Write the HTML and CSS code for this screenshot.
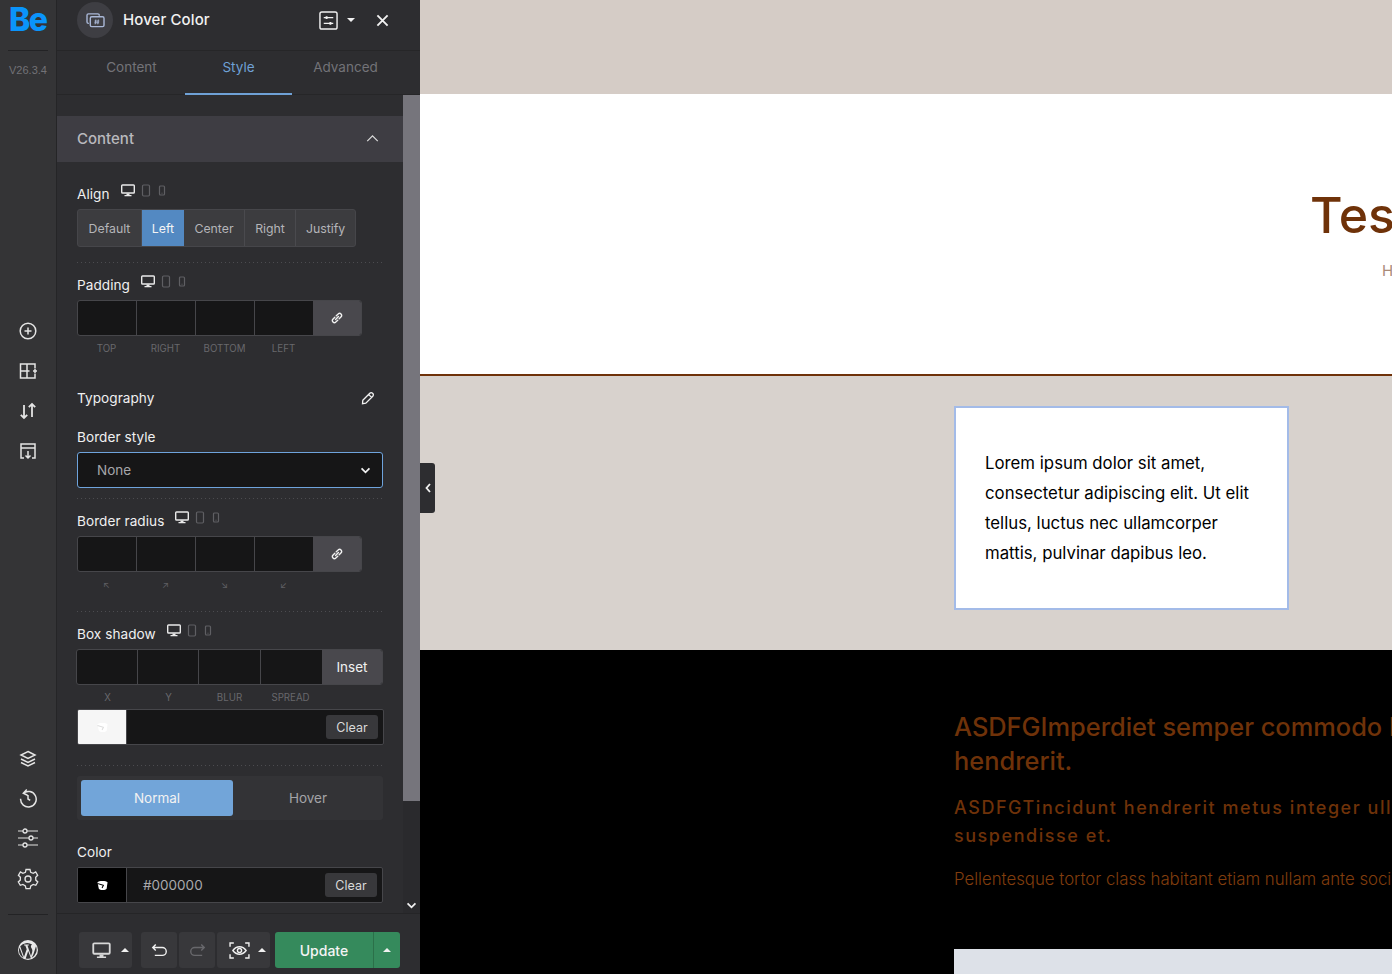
FILE: index.html
```html
<!DOCTYPE html>
<html lang="en">
<head>
<meta charset="utf-8">
<title>Hover Color</title>
<link rel="stylesheet" href="styles.css">
</head>
<body>
<svg class="defs" width="0" height="0" aria-hidden="true">
  <symbol id="i-desktop" viewBox="0 0 14 13"><path d="M1.500 1h11a.8.8 0 0 1 .8.8v6.400a.8.8 0 0 1-.8.8h-11a.8.8 0 0 1-.8-.8V1.800a.8.8 0 0 1 .8-.8z" fill="none" stroke="currentColor" stroke-width="1.400"/><path d="M5.500 9.500h3v1.500h-3zM3.500 11h7v1.200h-7z" fill="currentColor"/></symbol>
  <symbol id="i-tablet" viewBox="0 0 10 13"><rect x="1.500" y="1" width="7" height="11" rx="1.200" fill="none" stroke="currentColor" stroke-width="1.200"/></symbol>
  <symbol id="i-phone" viewBox="0 0 8 13"><rect x="1.500" y="2" width="5" height="9" rx="1" fill="none" stroke="currentColor" stroke-width="1.200"/><path d="M3.500 9.200h1" stroke="currentColor"/></symbol>
  <symbol id="i-link" viewBox="1 1 10 10"><path d="M4.800 7.200l2.400-2.400M4.200 5.400L2.400 7.200a1.750 1.750 0 0 0 2.400 2.400L6.600 7.800M5.400 4.200L7.200 2.400a1.750 1.750 0 0 1 2.400 2.400L7.800 6.600" fill="none" stroke="currentColor" stroke-width="1.150" stroke-linecap="round"/></symbol>
  <symbol id="i-drop" viewBox="0 0 14 12"><path d="M1.500 2.500C3 .8 11 .8 12.500 2.500L11.500 9.500C10.500 11.500 4 11.500 3 9.500z" fill="currentColor"/><path d="M1.500 3.800l6.500 2-1.500 3" fill="none" stroke="var(--drop-line)" stroke-width="1.100"/></symbol>
</svg>

<aside class="rail">
  <div class="rail-top">
    <div class="logo">Be</div>
    <div class="version">V26.3.4</div>
  </div>
  <div class="rail-tools">
    <svg class="rail-icon" viewBox="0 0 20 20"><circle cx="10" cy="10" r="7.800"/><path d="M10 6.500v7M6.500 10h7"/></svg>
    <svg class="rail-icon" viewBox="0 0 20 20"><path d="M17 7.500V3H2.500v14H17v-4.500M2.500 10h9M9 3v14"/><path d="M15 10h4M17 8v4"/></svg>
    <svg class="rail-icon heavy" viewBox="0 0 20 20"><path d="M6 4v13M2.800 13.800L6 17l3.200-3.200M14 16V3M10.800 6.200L14 3l3.200 3.200"/></svg>
    <svg class="rail-icon" viewBox="0 0 20 20"><path d="M6 17H3V3h14v14h-3M3 7h14M10 10v7M7.500 14.500l2.500 2.500 2.500-2.500"/></svg>
  </div>
  <div class="rail-bottom">
    <svg class="rail-icon" viewBox="0 0 20 20"><path d="M10 2.500l7 3.500-7 3.500L3 6zM3 10l7 3.500 7-3.500M3 13.500L10 17l7-3.500"/></svg>
    <svg class="rail-icon" viewBox="0 0 20 20"><path d="M5.300 5.300A7.800 7.800 0 1 1 2.600 10.800M8.800 1.500L5.300 5.300l4.200 2M10 7v4l2.200 1.400"/></svg>
    <svg class="rail-icon wide sliders" viewBox="0 0 22 22"><path d="M1 4h5M10 4h11M1 11h11M16 11h5M1 18h5M10 18h11"/><circle cx="8" cy="4" r="2"/><circle cx="14" cy="11" r="2"/><circle cx="8" cy="18" r="2"/></svg>
    <svg class="rail-icon wide" viewBox="0 0 22 22"><circle cx="11" cy="11" r="3"/><path d="M9 1.500h4l.7 2.800 2.500 1 2.500-1.400 2 3.400-2 2 .1 2.800 2 1.800-2 3.400-2.600-.8-2.400 1.400-.7 2.800H9l-.7-2.800-2.400-1.400-2.600.8-2-3.400 2-1.800.1-2.800-2-2 2-3.400 2.500 1.400 2.500-1z"/></svg>
    <div class="rail-rule"></div>
    <svg class="wp" viewBox="0 0 22 22"><circle cx="11" cy="11" r="10" fill="currentColor"/><path class="wp-w" d="M3.200 7.300L7 18l2.700-7.700-1.400-3.800-1.200-.1V5.500h4.700v.9l-1.300.1 3.500 10.400 1.100-3.500c.6-1.800.2-2.700-.4-3.800-.6-1-1.100-2-.6-3 .2-.5.600-.8 1-1A9 9 0 0 0 3.200 7.300z"/><path class="wp-w" d="M2.400 8.500L6.400 19A9 9 0 0 1 2.400 8.500zM11.200 12l-2.500 7.400a9 9 0 0 0 5.200-.1zM19 7.300l-2.500 7.600-1.800 3.800A9 9 0 0 0 19 7.300z"/></svg>
  </div>
</aside>

<section class="panel">
  <header class="panel-head">
    <div class="head-badge">
      <svg viewBox="0 0 20 18" class="head-glyph"><path d="M3 12H2.500A1.500 1.500 0 0 1 1 10.500v-7A1.500 1.500 0 0 1 2.500 2h10A1.500 1.500 0 0 1 14 3.500V4"/><rect x="4.500" y="5" width="14.500" height="10.500" rx="1.500"/><path class="fine" d="M10.300 8l-.6 5M13 8l-.6 5M9 9.600h5M8.800 11.400h5"/></svg>
    </div>
    <h1 class="head-title">Hover Color</h1>
    <svg class="head-sliders" viewBox="0 0 20 20"><rect x="1" y="1" width="18" height="18" rx="2"/><path d="M5 7h10M5 13h10"/><path class="knob" d="M8 5.500v3M12 11.500v3"/></svg>
    <span class="caret-down head-caret"></span>
    <svg class="head-close" viewBox="0 0 14 14"><path d="M1.500 1.500l11 11M12.500 1.500l-11 11"/></svg>
  </header>
  <nav class="tabs">
    <span class="tab">Content</span>
    <span class="tab tab-on">Style</span>
    <span class="tab">Advanced</span>
  </nav>
  <div class="panel-scroll">
    <div class="panel-body">
      <div class="group-head">
        <span>Content</span>
        <svg class="chev-up" viewBox="0 0 14 8"><path d="M1 7l6-6 6 6"/></svg>
      </div>
      <div class="fields">
        <div class="label-row label-align">
          <span class="label">Align</span>
          <span class="devices"><svg class="dev on"><use href="#i-desktop"/></svg><svg class="dev tb"><use href="#i-tablet"/></svg><svg class="dev ph"><use href="#i-phone"/></svg></span>
        </div>
        <div class="segments">
          <span class="seg seg-default">Default</span><span class="seg seg-on">Left</span><span class="seg seg-center">Center</span><span class="seg seg-right">Right</span><span class="seg seg-justify">Justify</span>
        </div>
        <div class="dots dots-a"></div>

        <div class="label-row">
          <span class="label">Padding</span>
          <span class="devices"><svg class="dev on"><use href="#i-desktop"/></svg><svg class="dev tb"><use href="#i-tablet"/></svg><svg class="dev ph"><use href="#i-phone"/></svg></span>
        </div>
        <div class="quad">
          <span class="cell"></span><span class="cell"></span><span class="cell"></span><span class="cell"></span>
          <span class="quad-btn"><svg class="link"><use href="#i-link"/></svg></span>
        </div>
        <div class="sublabels"><span>TOP</span><span>RIGHT</span><span>BOTTOM</span><span>LEFT</span></div>

        <div class="typo-row">
          <span class="label">Typography</span>
          <svg class="pencil" viewBox="0 0 14 14"><path d="M1.800 9.200L8.800 2.200a1.900 1.900 0 0 1 2.700 0l.3.300a1.900 1.900 0 0 1 0 2.700l-7 7-3.300.5zM7.600 3.400l3 3"/></svg>
        </div>
        <div class="label label-border">Border style</div>
        <div class="select"><span>None</span><svg class="chev" viewBox="0 0 12 8"><path d="M1.500 1.500L6 6l4.500-4.500"/></svg></div>
        <div class="dots dots-b"></div>

        <div class="label-row">
          <span class="label">Border radius</span>
          <span class="devices"><svg class="dev on"><use href="#i-desktop"/></svg><svg class="dev tb"><use href="#i-tablet"/></svg><svg class="dev ph"><use href="#i-phone"/></svg></span>
        </div>
        <div class="quad">
          <span class="cell"></span><span class="cell"></span><span class="cell"></span><span class="cell"></span>
          <span class="quad-btn"><svg class="link"><use href="#i-link"/></svg></span>
        </div>
        <div class="sublabels arrows"><span>↖</span><span>↗</span><span>↘</span><span>↙</span></div>
        <div class="dots dots-c"></div>

        <div class="label-row">
          <span class="label">Box shadow</span>
          <span class="devices"><svg class="dev on"><use href="#i-desktop"/></svg><svg class="dev tb"><use href="#i-tablet"/></svg><svg class="dev ph"><use href="#i-phone"/></svg></span>
        </div>
        <div class="quad quad-shadow">
          <span class="cell"></span><span class="cell"></span><span class="cell"></span><span class="cell"></span>
          <span class="quad-btn inset">Inset</span>
        </div>
        <div class="sublabels shadow-labels"><span>X</span><span>Y</span><span>BLUR</span><span>SPREAD</span></div>
        <div class="color-row color-row-shadow">
          <span class="swatch swatch-white"><svg class="drop"><use href="#i-drop"/></svg></span>
          <span class="color-value"></span>
          <span class="clear">Clear</span>
        </div>
        <div class="dots dots-d"></div>

        <div class="states">
          <span class="state state-on">Normal</span>
          <span class="state">Hover</span>
        </div>
        <div class="label label-color">Color</div>
        <div class="color-row">
          <span class="swatch swatch-black"><svg class="drop"><use href="#i-drop"/></svg></span>
          <span class="color-value">#000000</span>
          <span class="clear">Clear</span>
        </div>
      </div>
    </div>
    <div class="scrollbar">
      <div class="scroll-thumb"></div>
      <svg class="scroll-down" viewBox="0 0 12 8"><path d="M1.500 1.500L6 6l4.500-4.500"/></svg>
    </div>
  </div>
  <footer class="panel-foot">
    <div class="foot-btn foot-device">
      <svg class="foot-desktop"><use href="#i-desktop"/></svg>
      <span class="caret-up"></span>
    </div>
    <div class="foot-btn foot-square">
      <svg class="foot-arrow" viewBox="0 0 18 16"><path d="M5 1.500L1.800 4.800 5 8M2 4.800h10a4.200 4.200 0 0 1 0 8.400H4"/></svg>
    </div>
    <div class="foot-btn foot-square foot-dim">
      <svg class="foot-arrow" viewBox="0 0 18 16"><path d="M13 1.500l3.200 3.300L13 8M16 4.800H6a4.200 4.200 0 0 0 0 8.400h8"/></svg>
    </div>
    <div class="foot-btn foot-device foot-eye">
      <svg class="eye" viewBox="0 0 22 18"><path d="M1 5V1h4M17 1h4v4M21 13v4h-4M5 17H1v-4"/><path d="M4 9c3.800-5.300 10.200-5.300 14 0-3.800 5.300-10.200 5.300-14 0z"/><circle cx="11" cy="9" r="2.200"/></svg>
      <span class="caret-up"></span>
    </div>
    <div class="update">
      <span class="update-main">Update</span>
      <span class="update-more"><span class="caret-up"></span></span>
    </div>
  </footer>
</section>

<button class="collapse" type="button" aria-label="Collapse panel"><svg viewBox="0 0 6 10"><path d="M5 1L1.500 5 5 9"/></svg></button>

<main class="canvas">
  <section class="band band-top"></section>
  <section class="band band-title">
    <h2 class="title">Test</h2>
    <p class="subtitle">Hover</p>
  </section>
  <section class="band band-card">
    <div class="card">
      <p>Lorem ipsum dolor sit amet,<br>consectetur adipiscing elit. Ut elit<br>tellus, luctus nec ullamcorper<br>mattis, pulvinar dapibus leo.</p>
    </div>
  </section>
  <section class="band band-dark">
    <h3 class="dark-h">ASDFGImperdiet semper commodo lacus<br>hendrerit.</h3>
    <h4 class="dark-s">ASDFGTincidunt hendrerit metus integer ullamcorper<br>suspendisse et.</h4>
    <p class="dark-p">Pellentesque tortor class habitant etiam nullam ante sociis</p>
    <div class="dark-box"></div>
  </section>
</main>
</body>
</html>
```

FILE: styles.css
```css
* { box-sizing: border-box; }
html, body { height: 100%; }
body {
  margin: 0;
  display: flex;
  height: 974px;
  overflow: hidden;
  font-family: "Inter", "Noto Sans", sans-serif;
  background: #000;
  position: relative;
}
h1, h2, h3, h4, p { margin: 0; }
.defs { position: absolute; }

/* rail */
.rail {
  flex: 0 0 57px;
  display: flex;
  flex-direction: column;
  background: #343436;
  border-right: 1px solid #252527;
  color: #e6e6e6;
}
.rail-top { height: 84px; }
.logo {
  height: 51px;
  margin: 0 8px;
  border-bottom: 1px solid #232325;
  font: 800 32px/40px "Inter", sans-serif;
  letter-spacing: -1.4px;
  text-indent: 1px;
  color: #0a94fb;
}
.version {
  margin-top: 12px;
  text-align: center;
  font: 11px/14px "Liberation Sans", sans-serif;
  color: #727276;
}
.rail-tools {
  margin-top: 237px;
  display: flex;
  flex-direction: column;
  align-items: center;
  gap: 20px;
}
.rail-icon {
  width: 20px;
  height: 20px;
  fill: none;
  stroke: #e4e4e4;
  stroke-width: 1.5;
}
.rail-icon.heavy { stroke-width: 1.8; }
.rail-icon.wide { width: 22px; height: 22px; stroke-width: 1.3; }
.rail-icon.sliders path { stroke: #a8a8a8; stroke-width: 1.6; }
.rail-bottom {
  margin-top: auto;
  display: flex;
  flex-direction: column;
  align-items: center;
  gap: 19px;
  padding-bottom: 13px;
}
.rail-rule {
  width: 40px;
  height: 1px;
  background: #232325;
  margin: 5px 0 5px;
}
.wp { width: 22px; height: 22px; color: #e8e8e8; }
.wp-w { fill: #343436; }

/* panel */
.panel {
  flex: 0 0 363px;
  width: 363px;
  min-width: 0;
  display: flex;
  flex-direction: column;
  background: #2d2d30;
  color: #fff;
}
.panel-head {
  height: 51px;
  flex: none;
  display: flex;
  align-items: center;
  padding: 0 0 10px 20px;
  border-bottom: 1px solid #262628;
}
.head-badge {
  width: 36px;
  height: 36px;
  border-radius: 50%;
  background: #3e3e43;
  display: flex;
  align-items: center;
  justify-content: center;
}
.head-glyph {
  width: 19px;
  height: 17px;
  fill: none;
  stroke: #a9b7d6;
  stroke-width: 1.5;
}
.head-glyph .fine { stroke-width: 1; }
.head-title {
  margin-left: 10px;
  font-size: 15px;
  font-weight: 500;
  line-height: 20px;
  letter-spacing: .1px;
  color: #f1f1f1;
  flex: 1;
}
.head-sliders {
  width: 19px;
  height: 19px;
  fill: none;
  stroke: #f1f1f1;
  stroke-width: 1.5;
}
.head-sliders .knob { stroke-width: 2; }
.head-caret { margin: 0 0 0 9px; }
.head-close {
  width: 13px;
  height: 13px;
  margin: 0 31px 0 21px;
  fill: none;
  stroke: #f2f2f2;
  stroke-width: 2;
}
.caret-down {
  width: 0;
  height: 0;
  border-left: 4px solid transparent;
  border-right: 4px solid transparent;
  border-top: 4px solid #f1f1f1;
}
.caret-up {
  display: block;
  width: 0;
  height: 0;
  border-left: 4px solid transparent;
  border-right: 4px solid transparent;
  border-bottom: 4px solid #f1f1f1;
}

.tabs {
  height: 44px;
  flex: none;
  display: flex;
  padding-left: 21px;
  border-bottom: 1px solid #262628;
}
.tab {
  flex: 0 0 107px;
  padding-top: 8px;
  text-align: center;
  font-size: 13.500px;
  line-height: 17px;
  color: #737378;
}
.tab-on {
  color: #6fa1d6;
  border-bottom: 2px solid #6fa1d6;
  margin-bottom: -1px;
}

.panel-scroll {
  flex: 1;
  display: flex;
  min-height: 0;
}
.panel-body {
  flex: 1;
  min-width: 0;
  padding-top: 21px;
  overflow: hidden;
}
.scrollbar {
  flex: 0 0 17px;
  position: relative;
  background: #2a2a2d;
}
.scroll-thumb { height: 706px; background: #76757c; }
.scroll-down {
  position: absolute;
  left: 3px;
  bottom: 4px;
  width: 11px;
  height: 7px;
  fill: none;
  stroke: #f1f1f1;
  stroke-width: 2;
}
.group-head {
  height: 46px;
  background: #3e3d43;
  padding: 0 24px 1px 20px;
  display: flex;
  align-items: center;
  justify-content: space-between;
  font-size: 15px;
  font-weight: 500;
  color: #b9b9bd;
}
.chev-up {
  width: 13px;
  height: 7px;
  fill: none;
  stroke: #dcdcdc;
  stroke-width: 1.400;
}
.fields { padding: 0 20px; }

.label {
  font-size: 13.600px;
  line-height: 18px;
  letter-spacing: .05px;
  color: #f0f0f0;
}
.label-row {
  display: flex;
  align-items: flex-start;
  height: 30px;
  padding-top: 6px;
}
.label-align { margin-top: 17px; }
.devices {
  display: flex;
  align-items: center;
  margin: -2px 0 0 11px;
  height: 14px;
  color: #5f5f63;
}
.dev { height: 13px; width: 10px; margin-right: 7px; }
.dev.on { width: 14px; color: #e9e9e9; margin-right: 6px; }
.dev.ph { width: 8px; }

.segments {
  display: flex;
  width: fit-content;
  height: 38px;
  border: 1px solid #46464a;
  border-radius: 3px;
  background: #3c3c3f;
  overflow: hidden;
}
.seg {
  display: flex;
  align-items: center;
  justify-content: center;
  font-size: 12.300px;
  color: #b4b4b8;
  border-right: 1px solid #4a4a4e;
}
.seg-default { width: 64px; }
.seg-on { width: 42px; background: #5389c2; color: #f4f4f4; border-right: 0; }
.seg-center { width: 61px; }
.seg-right { width: 51px; }
.seg-justify { width: 59px; border-right: 0; }

.dots {
  background: repeating-linear-gradient(90deg, #4c4c50 0 1px, transparent 1px 4px) top left / 100% 1px no-repeat;
}
.dots-a { margin-top: 15px; height: 8px; }
.dots-b { margin-top: 10px; height: 8px; }
.dots-c { margin-top: 19px; height: 8px; }
.dots-d { margin-top: 20px; height: 11px; }

.quad {
  display: flex;
  width: 285px;
  height: 36px;
  border-radius: 3px;
  overflow: hidden;
  border: 1px solid #46464a;
  background: #161617;
}
.cell { width: 59px; border-right: 1px solid #46464a; }
.cell:nth-child(4) { border-right: 0; width: 58px; }
.quad-btn {
  flex: 1;
  display: flex;
  align-items: center;
  justify-content: center;
  background: #49484d;
}
.link { width: 12px; height: 12px; color: #f1f1f1; }
.quad-shadow { width: 307px; margin-left: -1px; }
.quad-shadow .cell { width: 61px; }
.quad-shadow .cell:nth-child(4) { width: 61px; }
.quad-shadow .cell:nth-child(3) { width: 62px; }
.inset { font-size: 13.500px; color: #f1f1f1; }

.sublabels {
  display: flex;
  width: 236px;
  height: 26px;
  padding-top: 6px;
  font-size: 9.700px;
  line-height: 13px;
  color: #68686c;
}
.sublabels span { width: 59px; text-align: center; }
.arrows { height: 20px; padding-top: 6px; font-size: 9px; color: #5f5f63; }
.shadow-labels { width: 246px; height: 24px; }
.shadow-labels span { width: 61px; }

.typo-row {
  display: flex;
  align-items: center;
  justify-content: space-between;
  height: 20px;
  margin-top: 26px;
  padding-right: 8px;
}
.pencil {
  width: 14px;
  height: 14px;
  fill: none;
  stroke: #f1f1f1;
  stroke-width: 1.300;
}
.label-border { margin-top: 20px; margin-bottom: 6px; }
.select {
  display: flex;
  align-items: center;
  justify-content: space-between;
  height: 36px;
  width: 306px;
  padding: 0 11px 0 19px;
  background: #161617;
  border: 1px solid #6ea3dc;
  border-radius: 3px;
  font-size: 13.500px;
  color: #a6a6aa;
}
.chev {
  width: 11px;
  height: 7px;
  fill: none;
  stroke: #f1f1f1;
  stroke-width: 2;
}
.color-row {
  display: flex;
  align-items: center;
  width: 306px;
  height: 36px;
  background: #161617;
  border: 1px solid #46464a;
  border-radius: 2px;
  overflow: hidden;
}
.color-row-shadow { width: 307px; }
.swatch {
  flex: 0 0 49px;
  align-self: stretch;
  display: flex;
  align-items: center;
  justify-content: center;
  border-right: 1px solid #46464a;
}
.swatch-white { background: #f6f6f6; color: #fff; --drop-line: #ddd; }
.swatch-black { background: #000; color: #fff; --drop-line: #000; }
.drop { width: 13px; height: 11px; }
.color-value {
  flex: 1;
  padding-left: 16px;
  font-size: 13.500px;
  color: #a9a9ad;
}
.clear {
  width: 52px;
  height: 24px;
  margin-right: 5px;
  display: flex;
  align-items: center;
  justify-content: center;
  background: #38383b;
  border-radius: 3px;
  font-size: 12.500px;
  color: #dadada;
}
.states {
  display: flex;
  width: 306px;
  height: 44px;
  padding: 4px 0 4px 4px;
  background: #333336;
  border-radius: 3px;
}
.state {
  flex: 1;
  display: flex;
  align-items: center;
  justify-content: center;
  font-size: 13.500px;
  color: #a3a3a7;
}
.state-on {
  flex: 0 0 152px;
  background: #72a5d9;
  color: #f2f2f2;
  border-radius: 3px;
}
.label-color { margin-top: 23px; margin-bottom: 6px; }

.panel-foot {
  height: 61px;
  flex: none;
  display: flex;
  padding: 18px 0 0 22px;
  border-top: 1px solid #252527;
  gap: 2px;
  background: #2d2d30;
}
.foot-btn {
  height: 36px;
  background: #38383b;
  border-radius: 3px;
  display: flex;
  align-items: center;
}
.foot-device { width: 53px; padding-left: 13px; gap: 10px; }
.foot-device:first-child { margin-right: 7px; }
.foot-desktop { width: 19px; height: 17px; color: #d7d7d7; }
.foot-square { width: 36px; justify-content: center; color: #f0f0f0; }
.foot-arrow {
  width: 17px;
  height: 15px;
  fill: none;
  stroke: #f0f0f0;
  stroke-width: 1.500;
}
.foot-dim .foot-arrow { stroke: #68686c; }
.foot-eye { padding-left: 12px; gap: 8px; }
.eye {
  width: 21px;
  height: 17px;
  fill: none;
  stroke: #f0f0f0;
  stroke-width: 1.500;
}
.update {
  display: flex;
  height: 36px;
  margin-left: 3px;
  border-radius: 3px;
  overflow: hidden;
  background: #358a5c;
  color: #f4f4f4;
}
.update-main {
  width: 99px;
  display: flex;
  align-items: center;
  justify-content: center;
  font-size: 14px;
  font-weight: 500;
  border-right: 1px solid #2b7049;
}
.update-more {
  width: 26px;
  display: flex;
  align-items: center;
  justify-content: center;
}

/* collapse tab */
.collapse {
  position: absolute;
  left: 420px;
  top: 463px;
  width: 15px;
  height: 50px;
  padding: 0;
  border: 0;
  border-radius: 0 3px 3px 0;
  background: #2d2d30;
  display: flex;
  align-items: center;
  justify-content: center;
}
.collapse svg {
  width: 6px;
  height: 10px;
  fill: none;
  stroke: #f1f1f1;
  stroke-width: 1.800;
}

/* canvas */
.canvas {
  flex: 1;
  min-width: 0;
  overflow: hidden;
  display: flex;
  flex-direction: column;
  background: #000;
}
.band { flex: none; white-space: nowrap; }
.band-top { height: 94px; background: #d5ccc6; }
.band-title {
  height: 282px;
  background: #fff;
  border-bottom: 2px solid #6f3209;
  padding: 90px 0 0 890px;
}
.title {
  font-size: 50px;
  line-height: 62px;
  font-weight: 500;
  color: #6f3209;
}
.subtitle {
  margin-top: 15px;
  margin-left: 72px;
  font-size: 15px;
  line-height: 20px;
  color: #a98a78;
}
.band-card {
  height: 274px;
  padding: 30px 0 0 534px;
  background: #d8d2cd;
}
.card {
  width: 335px;
  height: 204px;
  padding: 40px 0 0 29px;
  background: #fff;
  border: 2px solid #a3bbe8;
  font-size: 16.800px;
  line-height: 30px;
  color: #000;
}
.band-dark {
  flex: 1;
  padding: 60px 0 0 534px;
  background: #000;
  color: #6f3209;
}
.dark-h { font-size: 25.400px; line-height: 34px; font-weight: 500; }
.dark-s {
  margin-top: 16px;
  font-size: 18px;
  line-height: 28px;
  font-weight: 500;
  letter-spacing: 1.550px;
}
.dark-p {
  margin-top: 15px;
  font-size: 16.800px;
  line-height: 28px;
  font-weight: 300;
  color: #803d0d;
}
.dark-box {
  margin-top: 56px;
  height: 60px;
  background: #dde1e8;
}
```
